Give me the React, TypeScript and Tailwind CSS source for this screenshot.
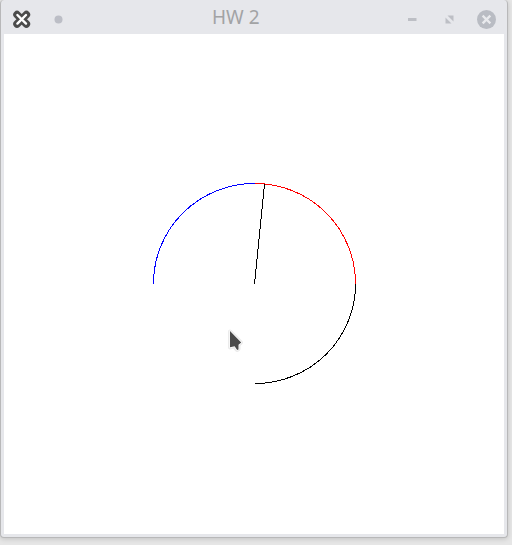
function TitleBar() {
  return (
    <header className="flex h-[34px] shrink-0 items-start">
      <svg className="h-[34px] w-[80px] shrink-0" viewBox="0 0 80 34">
        <path d="M17 14.6 L26.4 24 M26.4 14.6 L17 24" stroke="#4b4b4b" strokeWidth="7.5" strokeLinecap="round" />
        <path d="M17.4 15 L26 23.6 M26 15 L17.4 23.6" stroke="#ffffff" strokeWidth="2.4" strokeLinecap="round" />
        <circle cx="58.5" cy="19.5" r="4" fill="#bcbec6" />
      </svg>
      <h1 className="flex-1 pl-[132px] pt-[3px] font-['Noto_Sans','Open_Sans',sans-serif] text-[19px] leading-[28px] text-[#a2a3a5]">
        HW 2
      </h1>
      <svg className="h-[34px] w-[107px] shrink-0" viewBox="400 0 107 34">
        <rect x="408" y="18" width="8.5" height="3" fill="#bdbfc5" />
        <path d="M447.5 15.5 H453.5 V21.5 Z M445.5 17.5 V23.5 H451.5 Z" fill="#bdbfc5" />
        <circle cx="486.5" cy="19.5" r="9.5" fill="#b9bcc3" />
        <path d="M483.5 16.5 L489.5 22.5 M489.5 16.5 L483.5 22.5" stroke="#e9eaed" strokeWidth="2.4" strokeLinecap="square" />
      </svg>
    </header>
  );
}

function Drawing() {
  return (
    <svg className="block h-[500px] w-[500px]" viewBox="4 34 500 500" fill="none">
      <g shapeRendering="crispEdges" strokeWidth="1">
        <path d="M153.5 284 V283.5 A101 100 0 0 1 254.5 183.5 H255" stroke="#0000ff" />
        <path d="M255 183.5 A100.5 100 0 0 1 355.5 283.5 V284" stroke="#ff0000" />
        <path d="M355.5 284 A100.5 99.5 0 0 1 255 383.5" stroke="#000000" />
        <path d="M254.5 284 L264.5 184" stroke="#000000" />
      </g>
      <path d="M230 331.5 V347.5 L234 346.5 L237 350 L238.5 349 V345 L241 342.5 Z" stroke="#ebebeb" strokeWidth="4" strokeLinejoin="round" />
      <path d="M230 331 V347.3 L234.6 346.2 L237.2 350 L238.5 349.4 V344.8 L241.2 342.4 Z" fill="#4a4a4a" stroke="#ffffff" strokeWidth="1.2" strokeLinejoin="round" paintOrder="stroke" />
    </svg>
  );
}

export default function App() {
  return (
    <div className="h-[545px] w-[512px] overflow-hidden bg-[#e6e6e6]">
      <div className="flex h-[538px] w-[508px] flex-col rounded-[4px] border-b border-l border-r border-[#b8b8b9] bg-[#e6e7eb] shadow-[0_1px_5px_rgba(0,0,0,0.16)]">
        <div className="-ml-px flex flex-col">
          <TitleBar />
          <main className="ml-1 h-[500px] w-[500px] bg-white">
            <Drawing />
          </main>
        </div>
      </div>
    </div>
  );
}
